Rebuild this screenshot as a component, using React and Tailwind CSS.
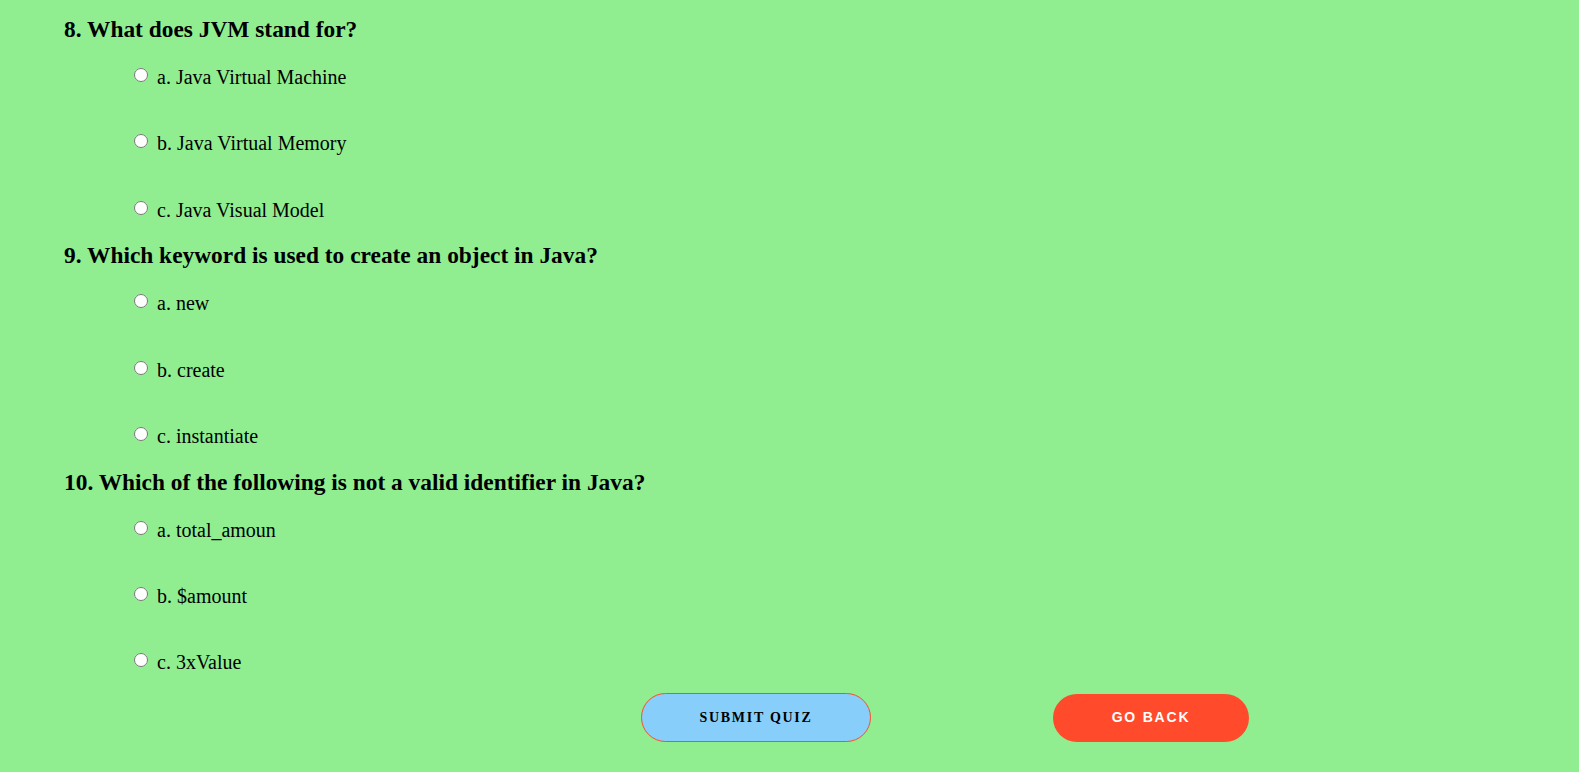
import React, { useState } from "react";

const questions = [
  {
    n: 8,
    q: "What does JVM stand for?",
    options: ["Java Virtual Machine", "Java Virtual Memory", "Java Visual Model"],
  },
  {
    n: 9,
    q: "Which keyword is used to create an object in Java?",
    options: ["new", "create", "instantiate"],
  },
  {
    n: 10,
    q: "Which of the following is not a valid identifier in Java?",
    options: ["total_amoun", "$amount", "3xValue"],
  },
];

const letters = ["a", "b", "c"];

const App = () => {
  const [answers, setAnswers] = useState({});

  return (
    <div
      className="min-h-screen bg-[#90ee90] text-black pt-[17px] pb-[30px]"
      style={{ fontFamily: "'Liberation Serif', 'Times New Roman', serif" }}
    >
      {questions.map((item) => (
        <div key={item.n} className="pl-[64px] mb-[21.8px]">
          <h3 className="text-[23.4px] leading-6 font-bold">
            {item.n}. {item.q}
          </h3>
          <div className="mt-6 pl-[70px] flex flex-col gap-[42.3px]">
            {item.options.map((opt, i) => (
              <label key={opt} className="flex items-center h-6 text-[20px] leading-6">
                <input
                  type="radio"
                  name={"q" + item.n}
                  checked={answers[item.n] === i}
                  onChange={() => setAnswers({ ...answers, [item.n]: i })}
                  className="w-[14px] h-[14px] m-0 mr-[9px] -mt-[4px]"
                />
                {letters[i]}. {opt}
              </label>
            ))}
          </div>
        </div>
      ))}

      {/* buttons */}
      <div className="flex items-center pl-[641px] gap-[182px] -mt-[3px]">
        <button className="w-[230px] h-[49px] rounded-full bg-[#87cefa] border border-[#ff4b2b] text-[14px] font-bold tracking-[1.7px] uppercase">
          Submit Quiz
        </button>
        <button
          className="w-[196px] h-[48px] rounded-full bg-[#ff4b2b] text-white text-[14px] font-bold tracking-[1.8px] uppercase"
          style={{ fontFamily: "'Liberation Sans', Arial, sans-serif" }}
        >
          Go Back
        </button>
      </div>
    </div>
  );
};

export default App;
